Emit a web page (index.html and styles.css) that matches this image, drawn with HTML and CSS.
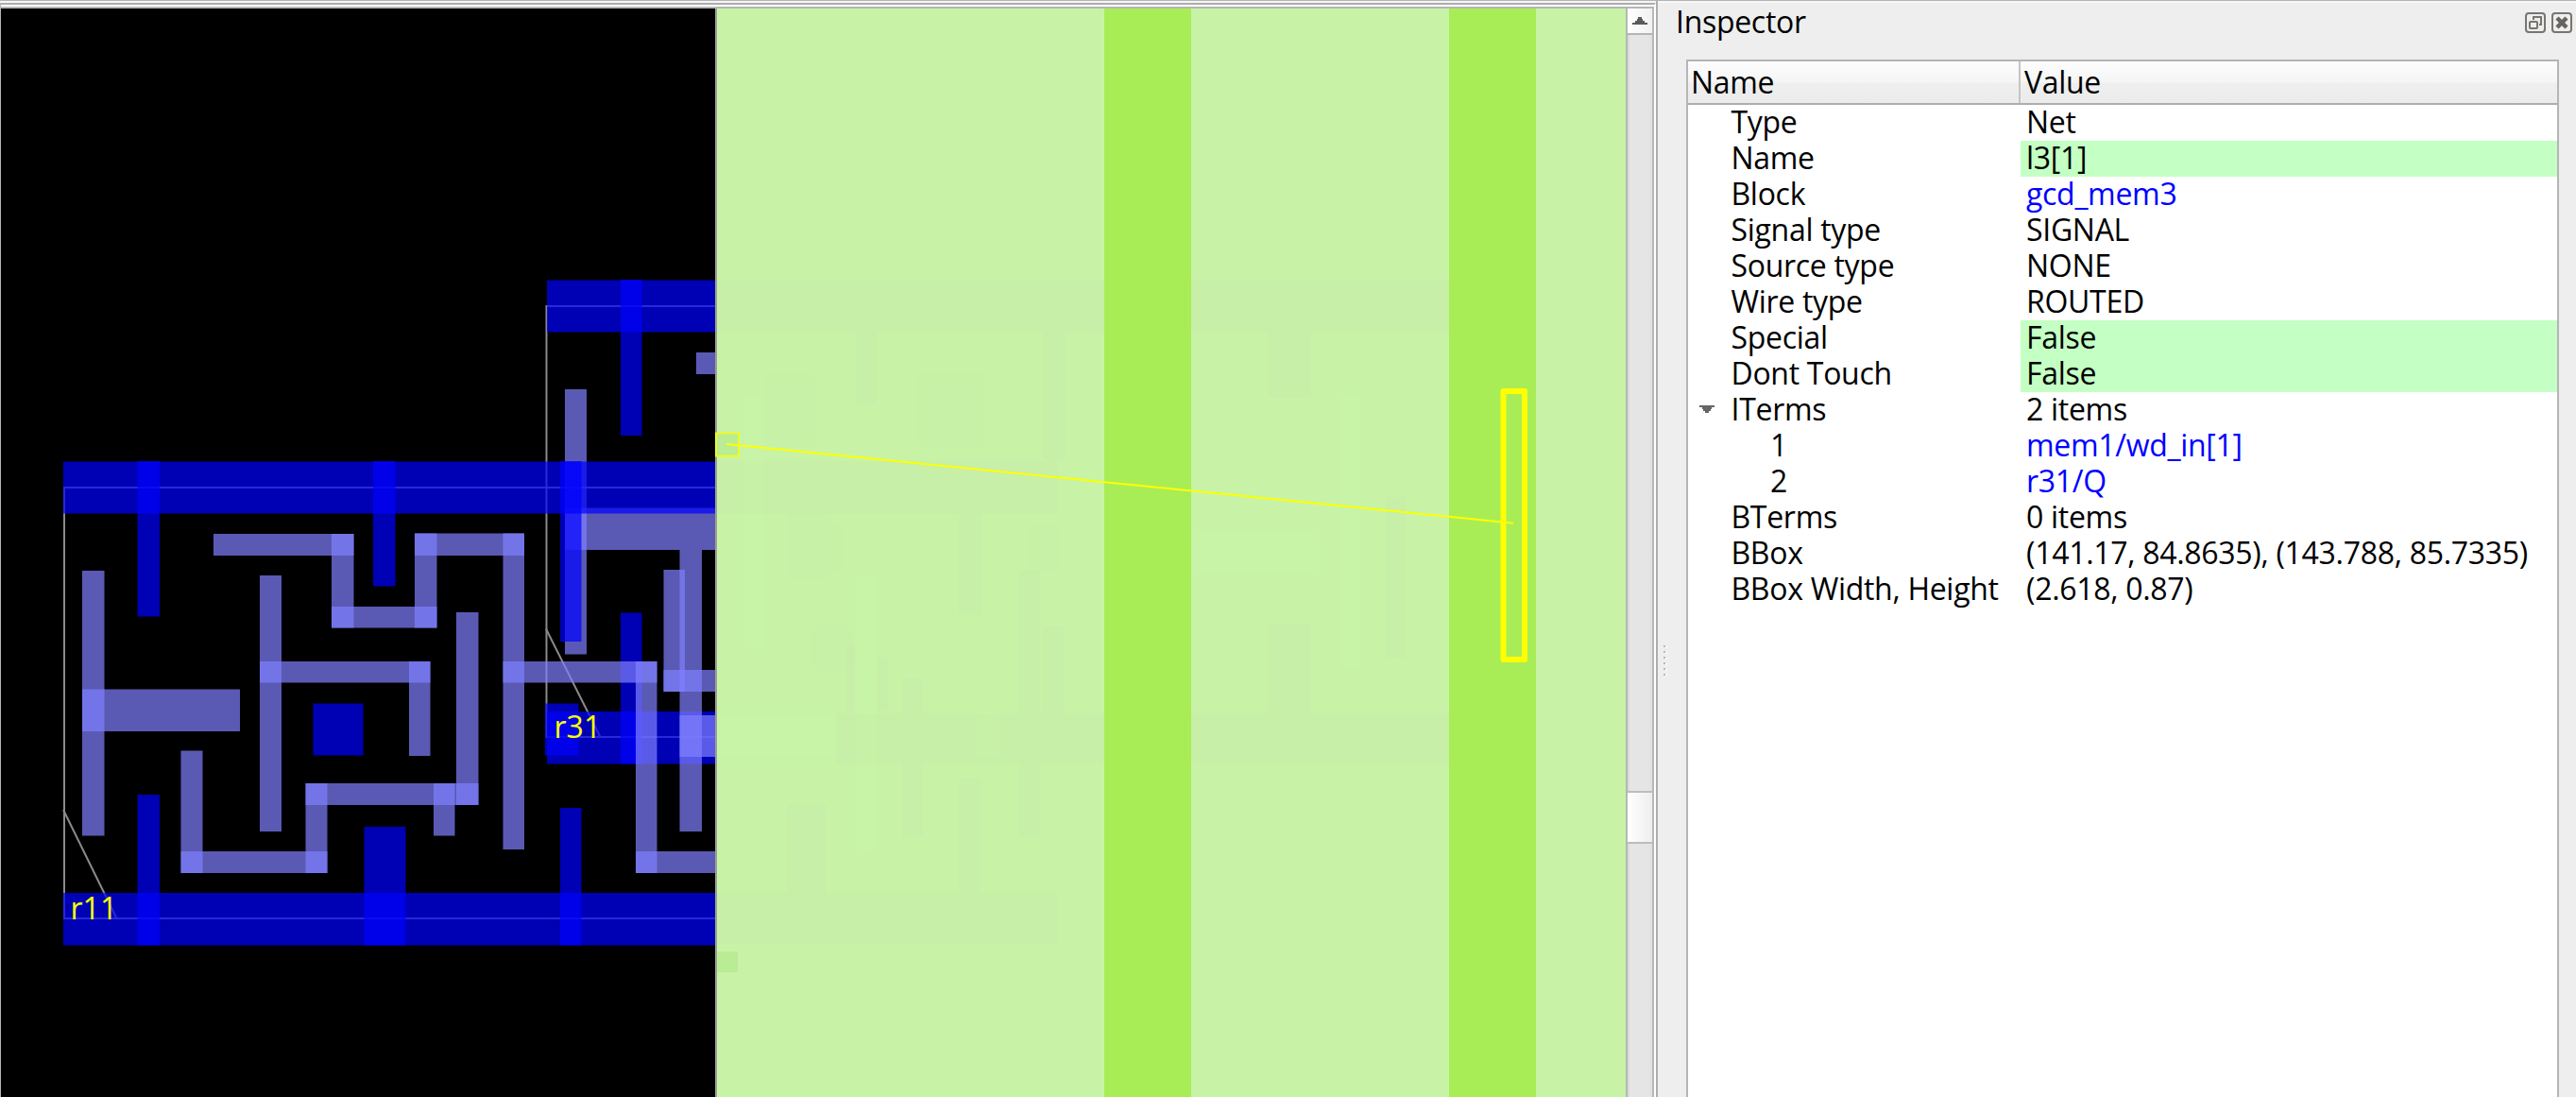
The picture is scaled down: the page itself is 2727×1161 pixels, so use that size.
FILE: index.html
```html
<!DOCTYPE html>
<html lang="en">
<head>
<meta charset="utf-8">
<title>Layout viewer</title>
<link rel="stylesheet" href="styles.css">
</head>
<body>
<div class="app">
  <section class="viewer">
    <div class="viewer-frame">
      <svg class="layout" viewBox="1 9 1720 1152" width="1720" height="1152">
        <rect x="1" y="9" width="1720" height="1152" fill="#000"/>
        <!-- instance outlines -->
        <g class="outline">
          <path d="M760 516H68V972H760"/>
          <path d="M760 324H578.5V780H760"/>
          <path d="M67 857L124 973M578 665.500L636 781"/>
        </g>
        <!-- r31 power -->
        <g class="power">
          <path d="M579 296.500H758V351.500H579z"/>
          <path d="M579 753H758V808.500H579z"/>
          <path d="M657 296H679.500V461H657z"/>
          <path d="M657 648.500H679.500V808.500H657z"/>
        </g>
        <!-- r31 metal -->
        <g class="metal">
          <path d="M737 373H758V396H737z"/>
          <path d="M598 412H621V692.500H598z"/>
          <path d="M598 537.500H758V582H598z"/>
          <path d="M719.500 582H743V880H719.500z"/>
          <path d="M702.500 603H725V732H702.500z"/>
          <path d="M702.500 709H758V732H702.500z"/>
          <path d="M719.500 757H758V801H719.500z"/>
        </g>
        <!-- r11 power -->
        <g class="power">
          <path d="M67 488.500H758V543.500H67z"/>
          <path d="M67 945H758V1000.500H67z"/>
          <path d="M145.500 488H169V652.500H145.500z"/>
          <path d="M395 488H418.500V620.500H395z"/>
          <path d="M145.500 841H169V1000.500H145.500z"/>
          <path d="M331.500 744.500H384.500V799.500H331.500z"/>
          <path d="M385.500 875H429.500V1000.500H385.500z"/>
          <path d="M593 488H615.500V679H593z"/>
          <path d="M593 855H615.500V1000.500H593z"/>
          <path d="M577 744.500H612.500V799.500H577z"/>
        </g>
        <!-- r11 metal -->
        <g class="metal">
          <path d="M87 604H110.500V884.500H87z"/>
          <path d="M87 729.500H254V774H87z"/>
          <path d="M275 609H298V880H275z"/>
          <path d="M275 700H455.500V722.500H275z"/>
          <path d="M433 700H455.500V800H433z"/>
          <path d="M226 565H374.500V588H226z"/>
          <path d="M351 565H374.500V664.500H351z"/>
          <path d="M351 642H462.500V664.500H351z"/>
          <path d="M439 564.500H462.500V664.500H439z"/>
          <path d="M439 564.500H555V588H439z"/>
          <path d="M532.500 564.500H555V899H532.500z"/>
          <path d="M483 648H506.500V852H483z"/>
          <path d="M323.500 829H506.500V852H323.500z"/>
          <path d="M459 829H481.500V884.500H459z"/>
          <path d="M323.500 829H346.500V924H323.500z"/>
          <path d="M191.500 901H346.500V924H191.500z"/>
          <path d="M191.500 794.500H214.500V924H191.500z"/>
          <path d="M532.500 700H695.500V722.500H532.500z"/>
          <path d="M673 700H695.500V924H673z"/>
          <path d="M673 901H758V924H673z"/>
        </g>
        <!-- macro -->
        <rect x="757" y="9" width="2" height="1152" fill="#999d94"/>
        <rect x="759" y="9" width="962" height="1152" fill="#c8f3a7"/>
        <!-- cells covered by the macro -->
        <g class="ghost" transform="translate(750 280) scale(.5102 .4975)">
          <path d="M18 33H1568V145H18zM18 418H725V530H18zM265 955H1568V1060H265zM18 1337H725V1445H18z"/>
          <path d="M307 145H350V297H307zM695 145H740V415H695zM520 530H565V745H520zM645 652H688V955H645zM695 770H738V955H695zM645 1060H688V1218H645z"/>
          <path d="M403 880H445V955H403zM403 1060H445V1218H403zM520 1092H563V1337H520zM163 1150H245V1337H163zM285 810H303V950H285zM350 835H372V950H350z"/>
          <path d="M1162 145H1250V283H1162zM1162 765H1250V955H1162zM1405 495H1447V835H1405z"/>
        </g>
        <g class="ghost faint" transform="translate(750 280) scale(.5102 .4975)">
          <path d="M115 233H220V388H115zM435 233H575V388H435zM163 530H247V668H163zM247 548H283V658H247zM662 548H730V658H662zM210 765H303V865H210z"/>
        </g>
        <g class="ghost-light" transform="translate(750 280) scale(.5102 .4975)">
          <path d="M307 660H350V1245H307zM75 275H115V815H75zM1307 275H1353V855H1307zM555 952H603V1048H555zM18 958H265V1048H18zM1000 573H1265V660H1000z"/>
        </g>
        <g fill="#a9ed56">
          <rect x="1169" y="9" width="92" height="1152"/>
          <rect x="1534" y="9" width="92" height="1152"/>
        </g>
        <rect x="759" y="1007" width="22" height="22" fill="#b9ec94"/>
        <!-- selected net -->
        <rect x="758" y="458.500" width="24" height="24" fill="#b9ec94" stroke="#f0fa22" stroke-width="2"/>
        <path d="M769 470L1602 553.700" stroke="#ff0" stroke-width="2" fill="none"/>
        <rect x="1591.500" y="414" width="22.500" height="284" fill="none" stroke="#ff0" stroke-width="6" stroke-linejoin="round"/>
        <text class="label" x="74.500" y="973">r11</text>
        <text class="label" x="586.500" y="781">r31</text>
      </svg>
      <div class="scrollbar">
        <div class="scroll-up"><svg width="16" height="8" viewBox="0 0 16 8"><path d="M0 8V6H3V4H5V2H6V0H10V2H11V4H13V6H16V8z" fill="#5a5a5a"/></svg></div>
        <div class="track-above"></div>
        <div class="thumb"></div>
        <div class="track-below"></div>
      </div>
    </div>
  </section>
  <aside class="dock">
    <div class="handle"><i></i><i></i><i></i><i></i><i></i><i></i></div>
    <div class="panel">
      <header class="titlebar">
        <h1 class="title">Inspector</h1>
        <svg class="btn" width="22" height="22" viewBox="0 0 22 22" fill="none" stroke="#77756f" stroke-width="2">
          <rect x="1" y="1" width="20" height="20" rx="3"/>
          <rect x="5" y="10" width="8" height="7" rx="1"/>
          <path d="M9 8V5H17V13H15"/>
        </svg>
        <svg class="btn" width="22" height="22" viewBox="0 0 22 22" fill="none" stroke="#77756f" stroke-width="2">
          <rect x="1" y="1" width="20" height="20" rx="3"/>
          <path d="M6 6L16 16M16 6L6 16" stroke="#66645f" stroke-width="4.500"/>
        </svg>
      </header>
      <div class="tree">
        <div class="head"><div class="h-name">Name</div><div class="h-value">Value</div></div>
        <div class="row"><div class="name">Type</div><div class="value">Net</div></div>
        <div class="row"><div class="name">Name</div><div class="value editable">l3[1]</div></div>
        <div class="row"><div class="name">Block</div><div class="value link">gcd_mem3</div></div>
        <div class="row"><div class="name">Signal type</div><div class="value">SIGNAL</div></div>
        <div class="row"><div class="name">Source type</div><div class="value">NONE</div></div>
        <div class="row"><div class="name">Wire type</div><div class="value">ROUTED</div></div>
        <div class="row"><div class="name">Special</div><div class="value editable">False</div></div>
        <div class="row"><div class="name">Dont Touch</div><div class="value editable">False</div></div>
        <div class="row"><div class="name open"><svg class="arrow" width="16" height="10" viewBox="0 0 16 10"><path d="M0 0H16V2H13V4H12V6H10V8H6V6H4V4H3V2H0z" fill="#666"/></svg><span>ITerms</span></div><div class="value">2 items</div></div>
        <div class="row"><div class="name child">1</div><div class="value link">mem1/wd_in[1]</div></div>
        <div class="row"><div class="name child">2</div><div class="value link">r31/Q</div></div>
        <div class="row"><div class="name">BTerms</div><div class="value">0 items</div></div>
        <div class="row"><div class="name">BBox</div><div class="value">(141.17, 84.8635), (143.788, 85.7335)</div></div>
        <div class="row"><div class="name">BBox Width, Height</div><div class="value">(2.618, 0.87)</div></div>
      </div>
    </div>
  </aside>
</div>
</body>
</html>
```
FILE: styles.css
```css
* { box-sizing: border-box; }

body {
  margin: 0;
  background: #eee;
  color: #000;
  font: 32px/36px "Open Sans", "Noto Sans", sans-serif;
  letter-spacing: -0.3px;
}

.app {
  display: flex;
  height: 1161px;
  overflow: hidden;
  border-top: 1px solid #b4b4b4;
}

.viewer {
  width: 1755px;
  padding-top: 2px;
  border-right: 2px solid #adadad;
  background: #f6f6f6;
}

.viewer-frame {
  display: flex;
  width: 1753px;
  height: 1158px;
  border: solid #b5b5b5;
  border-width: 2px 2px 0 1px;
  border-top-color: #adadad;
  padding-top: 4px;
  background: linear-gradient(#fff 0 2px, #b5b5b5 2px 4px, #fff 4px);
  border-right: 2px solid #fff;
}

.layout { display: block; flex: none; }

.outline path { fill: none; stroke: #8a8a8a; stroke-width: 2; }
.power path { fill: rgba(0, 0, 255, .706); }
.metal path { fill: rgba(128, 128, 255, .706); }
.ghost path { fill: rgba(200, 222, 168, .14); }
.faint path { fill: rgba(194, 222, 168, .07); }
.ghost-light path { fill: rgba(202, 248, 168, .2); }
.label { fill: #ff0; font-size: 32px; letter-spacing: 0; }

.scrollbar {
  display: flex;
  flex-direction: column;
  width: 30px;
  border: solid #b7b7b7;
  border-width: 0 2px;
  background: #e4e4e4;
}

.scroll-up {
  display: flex;
  align-items: center;
  justify-content: center;
  height: 28px;
  padding-right: 1px;
  border-bottom: 2px solid #b5b5b5;
  background: linear-gradient(90deg, #fff, #f1f1f1);
}

.track-above,
.track-below { background: linear-gradient(90deg, #dadada 0 2px, #e5e5e5 2px 22px, #e0e0e0); }
.track-above { height: 800px; }
.track-below { flex: 1; }

.thumb {
  height: 56px;
  border: solid #bcbcbc;
  border-width: 2px 0;
  background: linear-gradient(90deg, #fff, #eee);
}

.dock {
  display: flex;
  flex: 1;
  padding-top: 2px;
  background: linear-gradient(#f6f6f6 0 2px, #eee 2px);
}

.handle {
  display: flex;
  flex-direction: column;
  gap: 4px;
  width: 30px;
  padding: 680px 0 0 6px;
}

.handle i {
  width: 2px;
  height: 2px;
  background: #b8b8b8;
  box-shadow: 2px 1px #f8f8f8;
}

.panel { display: flex; flex-direction: column; flex: 1; }

.titlebar {
  display: flex;
  align-items: flex-start;
  gap: 6px;
  height: 60px;
  padding-right: 4px;
}

.title {
  flex: 1;
  margin: -3px 0 0 -11px;
  font-size: 32px;
  line-height: 45px;
  font-weight: 400;
}

.btn { margin-top: 10px; }

.tree {
  flex: 1;
  margin-right: 18px;
  border: 2px solid #b5b5b5;
  border-bottom: 0;
  background: #fff;
}

.head,
.row { display: grid; grid-template-columns: 352px 1fr; }

.head {
  height: 46px;
  border-bottom: 2px solid #adadad;
  background: linear-gradient(#fdfdfd, #f5f5f5 50%, #efefef 52%, #ebebeb);
  line-height: 43px;
}

.h-name { padding-left: 3px; border-right: 2px solid #c4c4c4; }
.h-value { padding-left: 4px; }

.row { height: 38px; }
.name { padding-left: 45.5px; white-space: nowrap; }
.open { display: flex; align-items: flex-start; padding-left: 12px; }
.arrow { margin: 14px 17.5px 0 0; }
.child { padding-left: 87px; }
.value { padding-left: 6px; white-space: nowrap; }
.editable { background: #c4ffc4; }
.link { color: #00f; }
```
